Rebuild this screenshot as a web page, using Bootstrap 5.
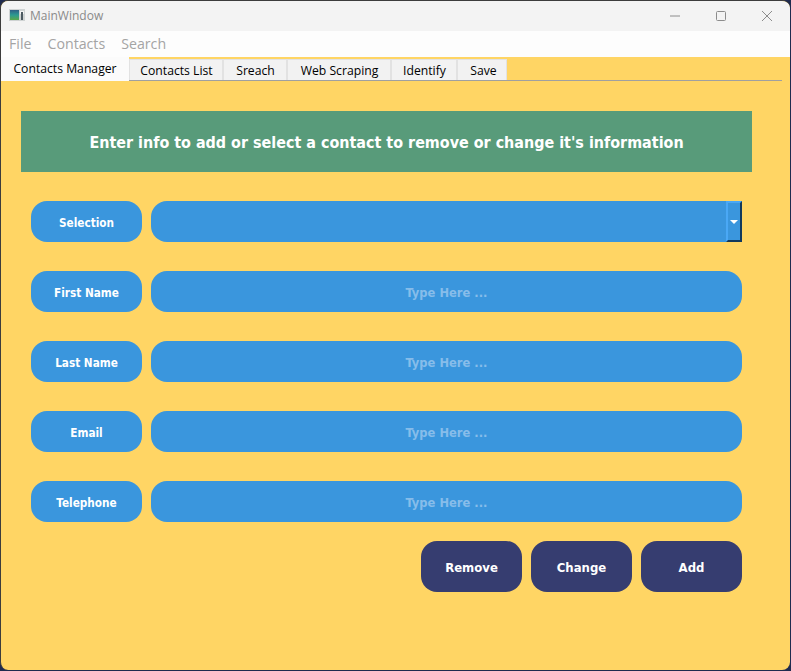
<!DOCTYPE html>
<html lang="en">
<head>
<meta charset="utf-8">
<title>MainWindow</title>
<link rel="stylesheet" href="https://cdn.jsdelivr.net/npm/bootstrap@5.3.0/dist/css/bootstrap.min.css">
<style>
html,body{height:100%;margin:0;background:#1f2b4f;overflow:hidden}
.win-shell{height:670px;width:790px;background:#ffd564;border-radius:8px;border:1px solid #3c3c3c;border-width:1px 0 0 1px;overflow:hidden;display:flex;flex-direction:column;font-family:"Open Sans","Noto Sans",sans-serif}
.title-strip{height:30px;background:#f3f3f3;flex:none;padding-left:8px;color:#8a8a8a;font-size:12px;font-family:"Open Sans",sans-serif}
.app-glyph{width:16px;height:12px;display:block;margin-bottom:2px}
.title-text{margin-left:5px}
.win-ctl{width:46px;height:30px;display:flex;align-items:center;justify-content:center}
.menu-strip{height:26px;flex:none;background:#fdfdfd;padding-left:8px;gap:16px;font-size:14.2px;color:#a4a4a4;line-height:26px}
.tab-strip{height:24px;flex:none;margin-right:8px;padding-left:0;border-bottom:1px solid #a0a0a0;flex-wrap:nowrap}
.tab-strip .nav-link{font-size:12.2px;line-height:16px;color:#000;background:#f2f2f2;border:1px solid #e2e2e2;border-bottom:0;border-radius:0;padding:2px 0 0 1px;margin:2px 0 0 0;height:21px;display:flex;align-items:center;justify-content:center}
.tab-strip .nav-link.active{background:#fbfbfb;margin:0 0 -1px 0;height:24px;border:0;padding:0;color:#000}
.tab-strip .nav-link.tab-f{padding-left:3px}
.tab-a{width:128px}.tab-b{width:94px}.tab-c{width:64px}.tab-d{width:104px}.tab-e{width:66px}.tab-f{width:50px}
.page-body{padding:30px 38px 0 20px}
.hero-band{background:#589b7a;height:61px;padding-top:3px;color:#fff;font-family:"DejaVu Sans Condensed","DejaVu Sans",sans-serif;font-weight:700;font-size:15.95px;margin-bottom:29px}
.form-stack{padding:0 10px;gap:29px}
.pill-label{width:111px;height:41px;padding-top:4px;flex:none;border-radius:16px;background:#3a96dd;color:#fff;font-family:"DejaVu Sans Condensed","DejaVu Sans",sans-serif;font-weight:700;font-size:11.7px}
.pill-field{height:41px;border-radius:16px;background:#3a96dd;border:0;color:#fff;text-align:center;font-family:"DejaVu Sans Condensed","DejaVu Sans",sans-serif;font-weight:700;font-size:12.8px;padding:2px 8px 0;box-shadow:none}
.pill-field:focus{background:#3a96dd;color:#fff;box-shadow:none}
.pill-field::placeholder{color:#87bdea;opacity:1}
.combo-box{height:41px;border-radius:16px 0 0 16px;background:#3a96dd}
.combo-arrow{width:16px;height:41px;background:#3a96dd;border-style:solid;border-width:2px;border-color:#4aa8f5 #12395c #12395c #4aa8f5}
.combo-tri{width:0;height:0;border-left:4px solid transparent;border-right:4px solid transparent;border-top:4px solid #fff}
.row-gap{gap:9px}
.action-row{gap:9px;margin-top:-10px}
.act-btn{width:101px;height:51px;padding-top:8px;border-radius:16px;background:#363d70;border:0;color:#fff;font-family:"DejaVu Sans Condensed","DejaVu Sans",sans-serif;font-weight:700;font-size:13px}
.act-btn:hover{background:#363d70;color:#fff}
</style>
</head>
<body>
<div class="win-shell">
  <div class="title-strip d-flex align-items-center">
    <svg class="app-glyph" viewBox="0 0 16 12"><defs><linearGradient id="pic" x1="0" y1="0" x2="0" y2="1"><stop offset="0" stop-color="#2f5f86"/><stop offset=".5" stop-color="#2b9a92"/><stop offset="1" stop-color="#5aa84a"/></linearGradient></defs><rect width="16" height="12" fill="#cfd3d3"/><rect x="1" y="1" width="9" height="10" fill="url(#pic)"/><rect x="11" y="2" width="4" height="3" fill="#f2f2f2"/><rect x="12" y="3" width="2" height="8" fill="#4d5a62"/></svg>
    <span class="title-text">MainWindow</span>
    <div class="ms-auto d-flex">
      <div class="win-ctl"><svg width="12" height="12" viewBox="0 0 12 12"><path d="M1 6h10" stroke="#8c8c8c" fill="none"/></svg></div>
      <div class="win-ctl"><svg width="12" height="12" viewBox="0 0 12 12"><rect x="1.500" y="1.500" width="9" height="9" rx="1" stroke="#8c8c8c" fill="none"/></svg></div>
      <div class="win-ctl"><svg width="12" height="12" viewBox="0 0 12 12"><path d="M1 1l10 10M11 1L1 11" stroke="#8c8c8c" fill="none"/></svg></div>
    </div>
  </div>
  <div class="menu-strip d-flex"><span>File</span><span>Contacts</span><span>Search</span></div>
  <ul class="nav tab-strip">
    <li class="nav-item"><a class="nav-link active tab-a" href="#">Contacts Manager</a></li>
    <li class="nav-item"><a class="nav-link tab-b" href="#">Contacts List</a></li>
    <li class="nav-item"><a class="nav-link tab-c" href="#">Sreach</a></li>
    <li class="nav-item"><a class="nav-link tab-d" href="#">Web Scraping</a></li>
    <li class="nav-item"><a class="nav-link tab-e" href="#">Identify</a></li>
    <li class="nav-item"><a class="nav-link tab-f" href="#">Save</a></li>
  </ul>
  <div class="page-body">
    <div class="hero-band d-flex align-items-center justify-content-center">Enter info to add or select a contact to remove or change it's information</div>
    <div class="form-stack d-flex flex-column">
      <div class="d-flex row-gap">
        <div class="pill-label d-flex align-items-center justify-content-center">Selection</div>
        <div class="combo-box flex-grow-1 d-flex justify-content-end">
          <div class="combo-arrow d-flex align-items-center justify-content-center"><span class="combo-tri"></span></div>
        </div>
      </div>
      <div class="d-flex row-gap">
        <div class="pill-label d-flex align-items-center justify-content-center">First Name</div>
        <input class="form-control pill-field" placeholder="Type Here ...">
      </div>
      <div class="d-flex row-gap">
        <div class="pill-label d-flex align-items-center justify-content-center">Last Name</div>
        <input class="form-control pill-field" placeholder="Type Here ...">
      </div>
      <div class="d-flex row-gap">
        <div class="pill-label d-flex align-items-center justify-content-center">Email</div>
        <input class="form-control pill-field" placeholder="Type Here ...">
      </div>
      <div class="d-flex row-gap">
        <div class="pill-label d-flex align-items-center justify-content-center">Telephone</div>
        <input class="form-control pill-field" placeholder="Type Here ...">
      </div>
      <div class="action-row d-flex justify-content-end">
        <button class="btn act-btn">Remove</button>
        <button class="btn act-btn">Change</button>
        <button class="btn act-btn">Add</button>
      </div>
    </div>
  </div>
</div>
<script src="https://cdn.jsdelivr.net/npm/bootstrap@5.3.0/dist/js/bootstrap.bundle.min.js"></script>
</body>
</html>
